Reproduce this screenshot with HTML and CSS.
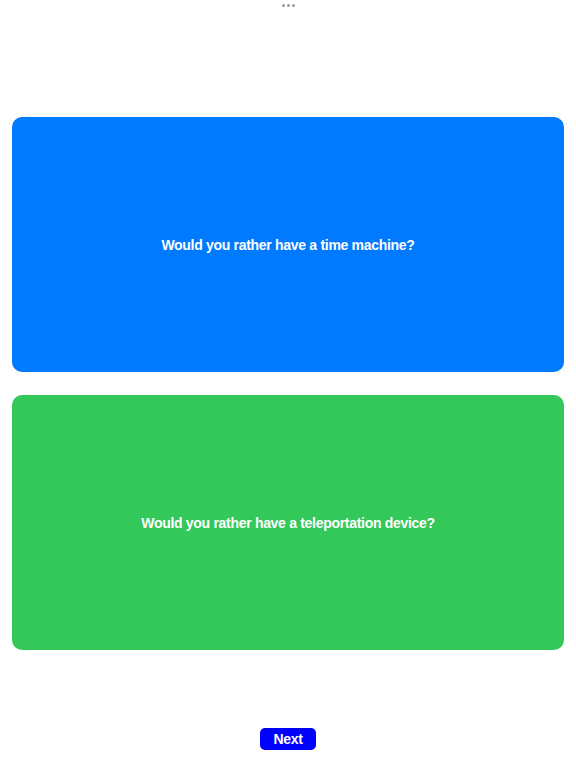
FILE: index.html
```html
<!DOCTYPE html>
<html>
<head>
<meta charset="utf-8">
<link rel="stylesheet" href="styles.css">
</head>
<body>
<div class="page">
  <div class="grabber"><span></span><span></span><span></span></div>
  <div class="cards">
    <div class="card blue">Would you rather have a time machine?</div>
    <div class="card green">Would you rather have a teleportation device?</div>
  </div>
  <div class="footer"><button class="next">Next</button></div>
</div>
</body>
</html>
```
FILE: styles.css
```css
html, body { margin: 0; padding: 0; background: #fff; }
body { font-family: "Liberation Sans", Arial, sans-serif; }
.page { width: 576px; height: 768px; display: flex; flex-direction: column; }
.grabber { display: flex; justify-content: center; gap: 2px; padding-top: 4px; height: 3px; }
.grabber span { width: 3px; height: 3px; background: #9a9a9a; border-radius: 1.5px; }
.cards { display: flex; flex-direction: column; gap: 23px; padding: 110px 12px 0; }
.card { height: 255px; border-radius: 10px; display: flex; align-items: center; justify-content: center; color: #fff; font-weight: bold; font-size: 14px; letter-spacing: -0.3px; }
.blue { background: #007aff; }
.green { background: #34c759; }
.footer { display: flex; justify-content: center; padding-top: 78px; }
.next { width: 56px; height: 22px; border: none; border-radius: 5px; background: #0000ff; color: #fff; font-family: "Liberation Sans", Arial, sans-serif; font-weight: bold; font-size: 14px; letter-spacing: -0.3px; padding: 0; }
```
